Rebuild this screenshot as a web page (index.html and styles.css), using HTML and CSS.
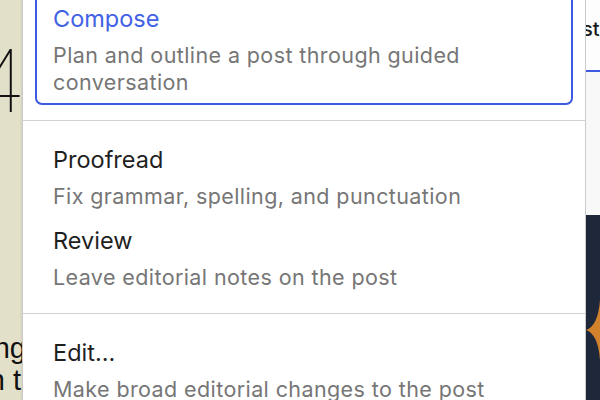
FILE: index.html
```html
<!DOCTYPE html>
<html lang="en">
<head>
    <meta charset="UTF-8">
    <meta name="viewport" content="width=device-width, initial-scale=1.0">
    <title>Assistant menu</title>
    <link rel="stylesheet" href="styles.css">
</head>
<body>

    <div class="page">
        <div class="left-page">
            <div class="left-inner">
                <div class="big-digit">4</div>
                <div class="left-lines">
                    <div class="left-line">ng</div>
                    <div class="left-line short">in t</div>
                </div>
            </div>
        </div>

        <div class="menu">
            <div class="menu-section first">
                <div class="menu-item selected">
                    <div class="item-title">Compose</div>
                    <div class="item-desc">Plan and outline a post through guided conversation</div>
                </div>
            </div>

            <div class="menu-section">
                <div class="menu-item">
                    <div class="item-title">Proofread</div>
                    <div class="item-desc">Fix grammar, spelling, and punctuation</div>
                </div>
                <div class="menu-item">
                    <div class="item-title">Review</div>
                    <div class="item-desc">Leave editorial notes on the post</div>
                </div>
            </div>

            <div class="menu-section">
                <div class="menu-item">
                    <div class="item-title">Edit...</div>
                    <div class="item-desc">Make broad editorial changes to the post</div>
                </div>
            </div>
        </div>

        <div class="right-page">
            <div class="tab-bar">
                <span class="tab-label">st</span>
            </div>
            <div class="tab-body"></div>
            <div class="dark-card">
                <svg class="star" width="30" height="60" viewBox="0 0 30 60">
                    <path d="M0 30 Q12 26 14 0 Q16 26 30 30 Q16 34 14 60 Q12 34 0 30 Z" fill="#d2822c"/>
                </svg>
            </div>
        </div>
    </div>

</body>
</html>
```

FILE: styles.css
```css
* {
    margin: 0;
    padding: 0;
    box-sizing: border-box;
}

body {
    width: 600px;
    height: 400px;
    overflow: hidden;
    font-family: 'Inter', 'Noto Sans', sans-serif;
    background: #ffffff;
}

.page {
    display: flex;
    height: 400px;
    overflow: hidden;
}

/* page peeking out on the left */
.left-page {
    width: 22px;
    flex-shrink: 0;
    overflow: hidden;
    background-color: #e2e0c9;
}

.left-inner {
    width: 70px;
    margin-left: -44px;
    height: 400px;
    display: flex;
    flex-direction: column;
}

.big-digit {
    font-family: 'Inter', sans-serif;
    font-weight: 100;
    font-size: 86px;
    line-height: 86px;
    color: #111;
    text-align: right;
    margin-top: 38px;
}

.left-lines {
    margin-top: auto;
    margin-bottom: 4px;
    font-family: 'Liberation Sans', sans-serif;
    font-size: 29px;
    line-height: 32px;
    color: #111;
    text-align: right;
}

.left-line.short {
    padding-right: 5px;
}

/* the dropdown */
.menu {
    width: 564px;
    flex-shrink: 0;
    margin-top: -19px;
    height: 419px;
    overflow: hidden;
    background: #ffffff;
    border: 1px solid #cacaca;
    border-bottom: none;
    box-shadow: 0 0 3px rgba(0, 0, 0, 0.12);
}

.menu-section {
    padding: 24px 30px 22px;
    border-top: 1px solid #d2d2d2;
    display: flex;
    flex-direction: column;
    gap: 16px;
}

.menu-section.first {
    border-top: none;
    padding: 12px 12px 15px;
}

.menu-item.selected {
    border: 2px solid #3d5ae0;
    border-radius: 7px;
    padding: 8px 16px 7px;
}

.item-title {
    font-size: 23.5px;
    line-height: 30px;
    color: #1f1f1f;
}

.selected .item-title {
    color: #4262e4;
}

.item-desc {
    margin-top: 8px;
    font-size: 21.5px;
    line-height: 27px;
    letter-spacing: 0.4px;
    color: #767676;
}

/* page peeking out on the right */
.right-page {
    flex: 1;
    display: flex;
    flex-direction: column;
    background: #fafafa;
    overflow: hidden;
}

.tab-bar {
    height: 72px;
    background: #fdfdfd;
    border-bottom: 2px solid #3d5ae0;
    padding-top: 17px;
    white-space: nowrap;
}

.tab-label {
    display: block;
    margin-left: -4px;
    font-size: 20px;
    font-weight: 500;
    color: #1a1a1a;
}

.tab-body {
    height: 143px;
    background: #f8f8f8;
}

.dark-card {
    flex: 1;
    background: #1f283a;
    padding-top: 85px;
}

.star {
    display: block;
}
```
